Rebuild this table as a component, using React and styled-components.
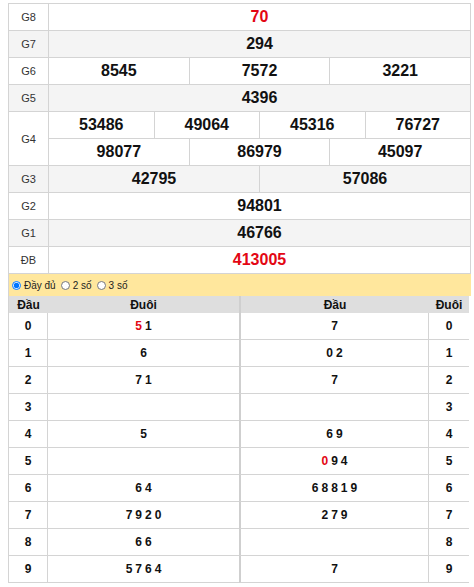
import styled, { createGlobalStyle } from 'styled-components'

const GlobalStyle = createGlobalStyle`
  body {
    margin: 0;
    padding: 3px 0 0 8px;
    background: #fff;
    font-family: "Liberation Sans", Arial, sans-serif;
  }
`

const prizes = [
  { name: 'G8', rows: [['70']], red: true },
  { name: 'G7', rows: [['294']], alt: true },
  { name: 'G6', rows: [['8545', '7572', '3221']] },
  { name: 'G5', rows: [['4396']], alt: true },
  { name: 'G4', rows: [['53486', '49064', '45316', '76727'], ['98077', '86979', '45097']] },
  { name: 'G3', rows: [['42795', '57086']], alt: true },
  { name: 'G2', rows: [['94801']] },
  { name: 'G1', rows: [['46766']], alt: true },
  { name: 'ĐB', rows: [['413005']], red: true },
]

// [tails, red tails, heads, red heads]
const loto = [
  [['5', '1'], [0], ['7']],
  [['6'], [], ['0', '2']],
  [['7', '1'], [], ['7']],
  [[], [], []],
  [['5'], [], ['6', '9']],
  [[], [], ['0', '9', '4'], [0]],
  [['6', '4'], [], ['6', '8', '8', '1', '9']],
  [['7', '9', '2', '0'], [], ['2', '7', '9']],
  [['6', '6'], [], []],
  [['5', '7', '6', '4'], [], ['7']],
]

const Board = styled.div`
  width: 461px;
  border: 1px solid #d4d4d4;
  border-bottom: none;
`

const PrizeRow = styled.div`
  display: flex;
  border-bottom: 1px solid #d4d4d4;
  background: ${(p) => (p.$alt ? '#f4f4f4' : '#fff')};
`

const Label = styled.div`
  width: 39px;
  flex: none;
  border-right: 1px solid #d4d4d4;
  display: flex;
  align-items: center;
  justify-content: center;
  font-size: 11px;
  color: #333;
`

const Lines = styled.div`
  flex: 1;
  display: flex;
  flex-direction: column;
`

const Line = styled.div`
  display: flex;
  height: 26px;
  & + & {
    border-top: 1px solid #d4d4d4;
  }
`

const Num = styled.div`
  flex: 1;
  display: flex;
  align-items: center;
  justify-content: center;
  font-size: 16px;
  font-weight: bold;
  color: ${(p) => (p.$red ? '#e30613' : '#111')};
  & + & {
    border-left: 1px solid #d4d4d4;
  }
`

const Lower = styled.div`
  width: 462px;
  border-left: 1px solid #d4d4d4;
`

const Options = styled.div`
  height: 22px;
  background: #ffe79d;
  display: flex;
  align-items: center;
  gap: 5px;
  padding-left: 3px;
  font-size: 10px;
  color: #222;
`

const Option = styled.label`
  display: flex;
  align-items: center;
  gap: 2px;
  input {
    width: 9px;
    height: 9px;
    margin: 0 1px 0 0;
  }
`

const Loto = styled.div`
  display: grid;
  grid-template-columns: 39px 191px 190px 40px;
`

const Head = styled.div`
  height: 17px;
  background: #dedede;
  display: flex;
  align-items: center;
  justify-content: center;
  font-size: 12px;
  font-weight: bold;
  color: #111;
  border-left: ${(p) => (p.$split ? '2px solid #cfcfcf' : 'none')};
`

const Cell = styled.div`
  height: 26px;
  border-bottom: 1px solid #d4d4d4;
  border-right: ${(p) => (p.$edge ? '1px solid #d4d4d4' : 'none')};
  border-left: ${(p) => (p.$split ? '2px solid #cfcfcf' : 'none')};
  display: flex;
  align-items: center;
  justify-content: center;
  gap: 3px;
  font-size: 12px;
  font-weight: bold;
  color: #111;
`

const Digit = styled.span`
  color: ${(p) => (p.$red ? '#e30613' : 'inherit')};
`

const Digits = ({ list, reds = [] }) =>
  list.map((d, i) => (
    <Digit key={i} $red={reds.includes(i)}>
      {d}
    </Digit>
  ))

const App = () => {
  return (
    <>
      <GlobalStyle />
      <Board>
        {prizes.map((p) => (
          <PrizeRow key={p.name} $alt={p.alt}>
            <Label>{p.name}</Label>
            <Lines>
              {p.rows.map((row, i) => (
                <Line key={i}>
                  {row.map((n) => (
                    <Num key={n} $red={p.red}>{n}</Num>
                  ))}
                </Line>
              ))}
            </Lines>
          </PrizeRow>
        ))}
      </Board>
      <Lower>
        <Options>
          <Option><input type='radio' name='mode' defaultChecked />Đầy đủ</Option>
          <Option><input type='radio' name='mode' />2 số</Option>
          <Option><input type='radio' name='mode' />3 số</Option>
        </Options>
        <Loto>
          <Head>Đầu</Head>
          <Head>Đuôi</Head>
          <Head $split>Đầu</Head>
          <Head>Đuôi</Head>
          {loto.map((r, i) => [
            <Cell key={`a${i}`} $edge>{i}</Cell>,
            <Cell key={`b${i}`}><Digits list={r[0]} reds={r[1]} /></Cell>,
            <Cell key={`c${i}`} $split $edge><Digits list={r[2]} reds={r[3]} /></Cell>,
            <Cell key={`d${i}`}>{i}</Cell>,
          ])}
        </Loto>
      </Lower>
    </>
  )
}

export default App
